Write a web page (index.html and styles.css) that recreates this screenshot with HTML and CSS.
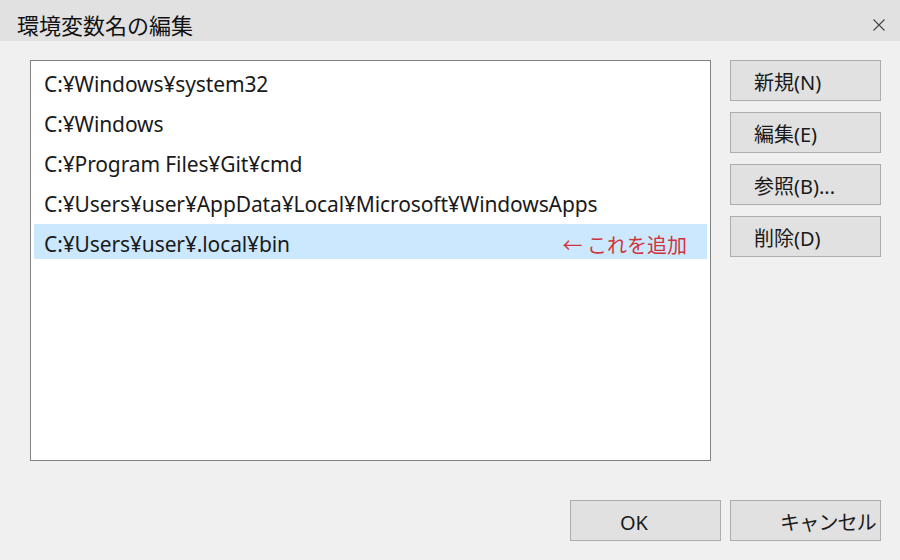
FILE: index.html
```html
<!DOCTYPE html>
<html lang="ja">
<head>
<meta charset="utf-8">
<link rel="stylesheet" href="styles.css">
</head>
<body>
<div class="dialog">
  <div class="titlebar">
    <span class="title">環境変数名の編集</span>
    <svg class="close" width="12" height="12" viewBox="0 0 12 12"><path d="M0.5 0.5 L11.5 11.5 M11.5 0.5 L0.5 11.5" stroke="#444" stroke-width="1.1" fill="none"/></svg>
  </div>
  <div class="content">
    <div class="main">
      <div class="list">
        <div class="row">C:¥Windows¥system32</div>
        <div class="row">C:¥Windows</div>
        <div class="row">C:¥Program Files¥Git¥cmd</div>
        <div class="row">C:¥Users¥user¥AppData¥Local¥Microsoft¥WindowsApps</div>
        <div class="row selected"><span>C:¥Users¥user¥.local¥bin</span><span class="note">←&nbsp;これを追加</span></div>
      </div>
      <div class="side">
        <div class="btn">新規(N)</div>
        <div class="btn">編集(E)</div>
        <div class="btn">参照(B)...</div>
        <div class="btn">削除(D)</div>
      </div>
    </div>
    <div class="footer">
      <div class="btn wide">OK</div>
      <div class="btn wide tight">キャンセル</div>
    </div>
  </div>
</div>
</body>
</html>
```
FILE: styles.css
```css
html, body {
  margin: 0;
  padding: 0;
}
body {
  width: 900px;
  height: 560px;
  overflow: hidden;
  background: #f0f0f0;
  font-family: "Noto Sans", "Noto Sans CJK JP", sans-serif;
  color: #1a1a1a;
}
.dialog {
  width: 900px;
  height: 560px;
  display: flex;
  flex-direction: column;
}
.titlebar {
  height: 41px;
  background: #e1e1e1;
  display: flex;
  align-items: center;
  justify-content: space-between;
  padding: 0 15px 0 17px;
  box-sizing: border-box;
}
.title {
  font-family: "Noto Sans CJK JP", sans-serif;
  font-size: 22px;
  color: #111;
  padding-top: 6px;
}
.close {
  display: block;
  margin-top: 9px;
}
.content {
  flex: 1;
  display: flex;
  flex-direction: column;
  padding: 19px 19px 0 30px;
}
.main {
  display: flex;
  gap: 19px;
}
.list {
  width: 681px;
  height: 401px;
  box-sizing: border-box;
  background: #fff;
  border: 1px solid #828282;
  padding: 3px;
  display: flex;
  flex-direction: column;
  gap: 5px;
}
.row {
  height: 35px;
  line-height: 41px;
  font-size: 21px;
  letter-spacing: -0.12px;
  padding-left: 10px;
  white-space: nowrap;
  display: flex;
  justify-content: space-between;
}
.row.selected {
  background: #cce8ff;
}
.note {
  font-family: "Noto Sans CJK JP", sans-serif;
  color: #d13438;
  padding-right: 20px;
  font-size: 20px;
  letter-spacing: 0;
}
.side {
  display: flex;
  flex-direction: column;
  gap: 11px;
}
.btn {
  width: 151px;
  height: 41px;
  box-sizing: border-box;
  background: #e1e1e1;
  border: 1px solid #adadad;
  font-size: 20px;
  line-height: 43px;
  padding-left: 23px;
  white-space: nowrap;
  overflow: hidden;
  font-family: "Noto Sans", "Noto Sans CJK JP", sans-serif;
}
.footer {
  margin-top: 39px;
  display: flex;
  justify-content: flex-end;
  gap: 9px;
}
.btn.wide {
  padding-left: 49px;
}
.btn.tight {
  letter-spacing: -0.8px;
}
```
